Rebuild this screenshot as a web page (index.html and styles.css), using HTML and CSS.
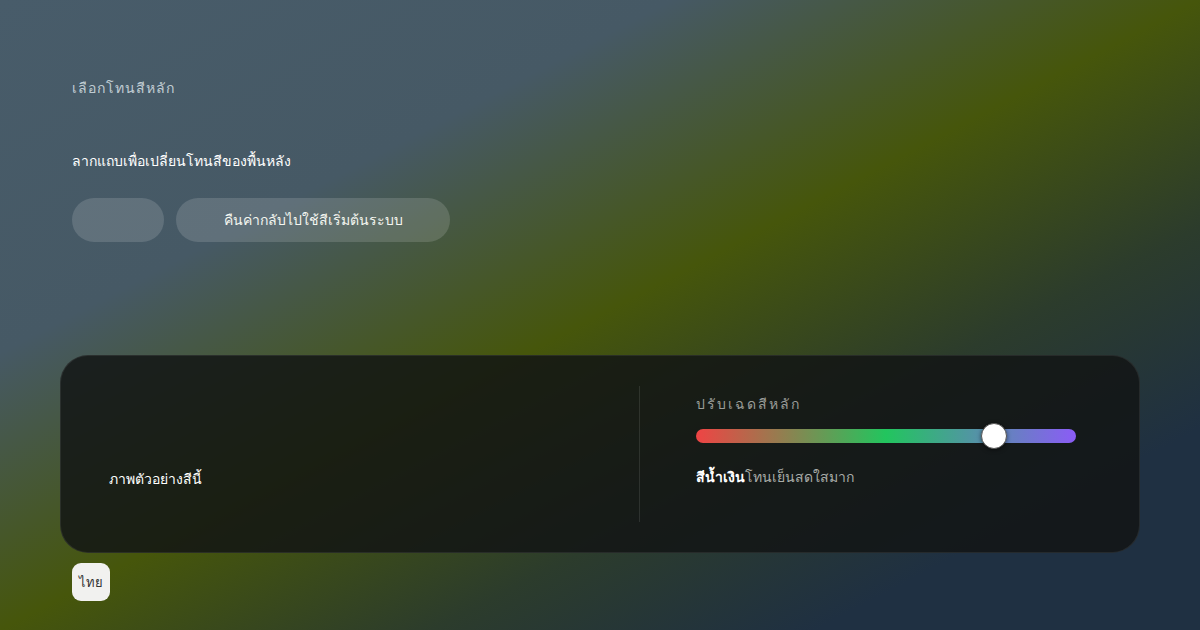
FILE: index.html
```html
<!DOCTYPE html>
<html lang="th">
<head>
    <meta charset="UTF-8">
    <meta name="viewport" content="width=device-width, initial-scale=1.0">
    <title>เลือกโทนสีหลัก</title>
    <link rel="stylesheet" href="styles.css">
</head>
<body>
    <main class="page">
        <!-- ส่วนหัว -->
        <header class="intro">
            <p class="eyebrow">เลือกโทนสีหลัก</p>
            <p class="lead">ลากแถบเพื่อเปลี่ยนโทนสีของพื้นหลัง</p>
            <div class="actions">
                <button class="pill pill-short" type="button"></button>
                <button class="pill" type="button">คืนค่ากลับไปใช้สีเริ่มต้นระบบ</button>
            </div>
        </header>

        <!-- แผงควบคุมสี -->
        <section class="panel">
            <div class="preview">
                <p class="preview-text">ภาพตัวอย่างสีนี้</p>
            </div>
            <div class="divider"></div>
            <div class="controls">
                <p class="control-label">ปรับเฉดสีหลัก</p>
                <div class="hue-track">
                    <span class="hue-thumb" style="left: 78.4%;"></span>
                </div>
                <p class="hue-value"><strong>สีน้ำเงิน</strong>โทนเย็นสดใสมาก</p>
            </div>
        </section>

        <button class="lang" type="button">ไทย</button>
    </main>
</body>
</html>
```

FILE: styles.css
```css
/* พื้นหลังและตัวอักษรทั่วไป */
html, body {
    margin: 0;
    height: 100%;
}

body {
    font-family: "Noto Sans", "DejaVu Sans", sans-serif;
    color: #fff;
    background: linear-gradient(to bottom right, #485c6a 0%, #465965 28%, #46560b 50%, #2c3c2c 68%, #1f3042 84%, #1f3042 100%);
    overflow: hidden;
}

p {
    margin: 0;
}

.page {
    box-sizing: border-box;
    height: 100%;
    padding: 78px 60px 0;
    display: flex;
    flex-direction: column;
}

/* ส่วนหัว */
.intro {
    padding: 0 12px;
}

.eyebrow {
    font-size: 14px;
    line-height: 20px;
    letter-spacing: 1px;
    color: rgba(225, 235, 240, 0.8);
}

.lead {
    margin-top: 53px;
    font-size: 14px;
    line-height: 20px;
    color: #fff;
}

.actions {
    display: flex;
    gap: 12px;
    margin-top: 27px;
}

.pill {
    height: 44px;
    width: 274px;
    border: none;
    border-radius: 22px;
    background: rgba(255, 255, 255, 0.14);
    color: #f4f6f0;
    font-family: inherit;
    font-size: 14px;
    cursor: pointer;
}

.pill-short {
    width: 92px;
}

/* แผงควบคุม */
.panel {
    margin-top: 113px;
    height: 198px;
    box-sizing: border-box;
    padding: 30px 63px 30px 48px;
    border-radius: 28px;
    border: 1px solid rgba(255, 255, 255, 0.08);
    background: rgba(18, 20, 20, 0.84);
    display: grid;
    grid-template-columns: 1fr 1px 380px;
    column-gap: 56px;
}

.preview {
    display: flex;
    align-items: flex-end;
    padding-bottom: 33px;
}

.preview-text {
    font-size: 14px;
    line-height: 20px;
}

.divider {
    background: rgba(255, 255, 255, 0.1);
}

.controls {
    padding-top: 8px;
}

.control-label {
    font-size: 14px;
    line-height: 20px;
    letter-spacing: 2px;
    color: #9a9c98;
}

.hue-track {
    position: relative;
    margin-top: 15px;
    height: 14px;
    border-radius: 7px;
    background: linear-gradient(90deg, #ef4444, #22c55e, #8b5cf6);
}

.hue-thumb {
    position: absolute;
    top: 50%;
    width: 24px;
    height: 24px;
    border-radius: 50%;
    background: #fff;
    border: 1px solid #555;
    box-shadow: 0 1px 4px rgba(0, 0, 0, 0.5);
    transform: translate(-50%, -50%);
}

.hue-value {
    margin-top: 24px;
    font-size: 14px;
    line-height: 20px;
    color: #a9aca8;
}

.hue-value strong {
    color: #fff;
    font-weight: 700;
}

/* ปุ่มภาษา */
.lang {
    align-self: flex-start;
    margin: 10px 0 0 12px;
    width: 38px;
    height: 38px;
    padding: 0;
    border: none;
    border-radius: 9px;
    background: #f1f1ef;
    color: #333;
    font-family: inherit;
    font-size: 13px;
    cursor: pointer;
}
```
